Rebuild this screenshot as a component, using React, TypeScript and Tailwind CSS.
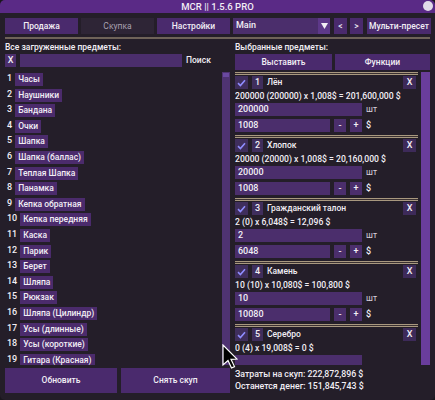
import React from "react";

const items = [
  "Часы",
  "Наушники",
  "Бандана",
  "Очки",
  "Шапка",
  "Шапка (баллас)",
  "Теплая Шапка",
  "Панамка",
  "Кепка обратная",
  "Кепка передняя",
  "Каска",
  "Парик",
  "Берет",
  "Шляпа",
  "Рюкзак",
  "Шляпа (Цилиндр)",
  "Усы (длинные)",
  "Усы (короткие)",
  "Гитара (Красная)",
];

const cards = [
  { name: "Лён", formula: "200000 (200000) x 1,008$ = 201,600,000 $", qty: "200000", price: "1008" },
  { name: "Хлопок", formula: "20000 (20000) x 1,008$ = 20,160,000 $", qty: "20000", price: "1008" },
  { name: "Гражданский талон", formula: "2 (0) x 6,048$ = 12,096 $", qty: "2", price: "6048" },
  { name: "Камень", formula: "10 (10) x 10,080$ = 100,800 $", qty: "10", price: "10080" },
  { name: "Серебро", formula: "0 (4) x 19,008$ = 0 $", qty: "0", price: "19008" },
];

// double tan line used between blocks
function Sep() {
  return (
    <div className="flex flex-col shrink-0">
      <div className="h-px bg-[#a8987f]" />
      <div className="h-px bg-[#3a3030]" />
      <div className="h-px bg-[#a8987f]" />
    </div>
  );
}

function Check() {
  return (
    <div className="w-[13px] h-[13px] bg-[#3f2e5c] flex items-center justify-center shrink-0">
      <svg width="9" height="8" viewBox="0 0 9 8">
        <path d="M1 4.2 L3.4 6.5 L8 1.3" stroke="#8f8dff" strokeWidth="1.6" fill="none" />
      </svg>
    </div>
  );
}

// last card is cut by the scroll area, so only its upper part is drawn
function Card({ n, c, cut }: { n: number; c: (typeof cards)[number]; cut?: boolean }) {
  return (
    <div className="flex flex-col shrink-0">
      <Sep />
      <div className="mt-[1px] h-[13px] flex items-center">
        <Check />
        <div className="ml-[4px] w-[11px] h-[13px] bg-[#3f2e5c] flex items-center justify-center text-[9px]">{n}</div>
        <span className="ml-[4px]">{c.name}</span>
        <div className="ml-auto mr-[2px] w-[13px] h-[13px] bg-[#3d2a59] flex items-center justify-center text-[9px]">X</div>
      </div>
      <div className="h-[14px] leading-[14px] whitespace-nowrap text-[8.6px]">{c.formula}</div>
      <div className="h-[13px] flex items-center">
        <div className="w-[127px] h-full bg-[#4b2e6c] px-[3px] leading-[13px] text-[9px]">{cut ? "" : c.qty}</div>
        {!cut && <span className="ml-[4px] font-normal text-[#d8d2de]">шт</span>}
      </div>
      {!cut && (
        <>
          <div className="mt-[3px] h-[13px] flex items-center text-[9px]">
            <div className="w-[95px] h-full bg-[#4b2e6c] px-[3px] leading-[13px]">{c.price}</div>
            <div className="ml-[4px] w-[12px] h-full bg-[#4b2e6c] flex items-center justify-center">-</div>
            <div className="ml-[4px] w-[12px] h-full bg-[#4b2e6c] flex items-center justify-center">+</div>
            <span className="ml-[4px]">$</span>
          </div>
          <div className="h-[3px]" />
        </>
      )}
    </div>
  );
}

export default function App() {
  return (
    <div className="w-[435px] h-[400px] bg-[#1a171d] relative font-['Roboto',sans-serif] text-[8.5px] font-medium text-[#f2eef5]">
      <div className="h-full rounded-[5px] overflow-hidden bg-[#241e29] flex flex-col">
        {/* title bar */}
        <div className="h-[13px] bg-[#5a2a86] relative flex items-center justify-center shrink-0">
          <span className="leading-[13px] text-[9.5px]">MCR || 1.5.6 PRO</span>
          <div className="absolute right-[2px] top-[1px] w-[10px] h-[10px] rounded-full bg-[#e2dbe9]" />
        </div>

        <div className="flex-1 flex flex-col px-[5px] min-h-0">
          {/* top tabs */}
          <div className="mt-[5px] h-[16px] flex shrink-0">
            <div className="w-[73px] shrink-0 bg-[#4a2a6d] flex items-center justify-center">Продажа</div>
            <div className="ml-[3px] w-[73px] shrink-0 bg-[#2e2536] text-[#a9a1b1] font-normal flex items-center justify-center">Скупка</div>
            <div className="ml-[3px] w-[73px] shrink-0 bg-[#4a2a6d] flex items-center justify-center">Настройки</div>
            <div className="ml-[3px] w-[97px] shrink-0 bg-[#4b2e6c] flex items-center">
              <span className="pl-[3px] flex-1 text-[9px]">Main</span>
              <div className="w-[12px] h-full bg-[#5d3889] flex items-center justify-center">
                <svg width="7" height="6" viewBox="0 0 7 6">
                  <path d="M0 0 H7 L3.5 6 Z" fill="#f2eef5" />
                </svg>
              </div>
            </div>
            <div className="ml-[4px] w-[13px] shrink-0 bg-[#4a2a6d] flex items-center justify-center">&lt;</div>
            <div className="ml-[3px] w-[13px] shrink-0 bg-[#4a2a6d] flex items-center justify-center">&gt;</div>
            <div className="ml-[4px] w-[64px] shrink-0 bg-[#4a2a6d] flex items-center justify-center whitespace-nowrap">Мульти-пресет</div>
          </div>

          <div className="mt-[3px] h-[2px] bg-[#6f6359] shrink-0" />

          <div className="flex-1 flex gap-[5px] min-h-0">
            {/* left column */}
            <div className="w-[225px] shrink-0 flex flex-col">
              <div className="mt-[2px] h-[12px] leading-[12px]">Все загруженные предметы:</div>
              <div className="mt-[1px] h-[13px] flex items-center">
                <div className="w-[11px] h-full bg-[#4b2e6c] flex items-center justify-center text-[9px]">X</div>
                <div className="ml-[4px] w-[162px] h-full bg-[#4b2e6c]" />
                <span className="ml-[4px]">Поиск</span>
              </div>
              <div className="mt-[5px] h-[293px] flex overflow-hidden">
                <div className="flex-1 flex flex-col gap-[2.6px] pt-[1px] overflow-hidden">
                  {items.map((t, i) => (
                    <div key={t} className="flex items-start h-[13px] shrink-0">
                      <span className="pl-[2px] leading-[10px] text-[9px]">{i + 1}</span>
                      <div className="ml-[3px] h-[13px] px-[3px] bg-[#4b2b6c] leading-[13px] whitespace-nowrap">{t}</div>
                    </div>
                  ))}
                </div>
                <div className="w-[8px] h-full bg-[#4f3372] flex flex-col">
                  <div className="h-[4px] mx-[1px] mt-[1px] bg-[#6a49a0]" />
                </div>
              </div>
              <div className="mt-[3px] h-[25px] flex gap-[4px]">
                <div className="w-[112px] bg-[#4a2a6d] flex items-center justify-center">Обновить</div>
                <div className="flex-1 bg-[#4a2a6d] flex items-center justify-center">Снять скуп</div>
              </div>
            </div>

            {/* right column */}
            <div className="w-[195px] shrink-0 min-w-0 flex flex-col">
              <div className="mt-[2px] h-[12px] leading-[12px]">Выбранные предметы:</div>
              <div className="mt-[1px] h-[16px] flex gap-[3px]">
                <div className="w-[97px] bg-[#4a2a6d] flex items-center justify-center">Выставить</div>
                <div className="flex-1 bg-[#4a2a6d] flex items-center justify-center">Функции</div>
              </div>
              <div className="mt-[2px] h-[293px] flex overflow-hidden">
                <div className="flex-1 min-w-0 flex flex-col overflow-hidden">
                  {cards.map((c, i) => (
                    <Card key={c.name} n={i + 1} c={c} cut={i === cards.length - 1} />
                  ))}
                </div>
                <div className="ml-[3px] w-[9px] h-full shrink-0 bg-[#6a3d9c]" />
              </div>
              <div className="mt-[3px] h-[12px] leading-[12px] text-[8.75px]">Затраты на скуп: 222,872,896 $</div>
              <div className="h-[12px] leading-[12px] text-[8.75px]">Останется денег: 151,845,743 $</div>
            </div>
          </div>
        </div>
      </div>

      {/* mouse pointer */}
      <svg className="absolute left-[222px] top-[344px]" width="16" height="26" viewBox="0 0 16 26">
        <path d="M1 1 L1 21 L6 16.5 L9.5 24 L12.5 22.6 L9 15.3 L15 15 Z" fill="#000" stroke="#fff" strokeWidth="1.2" />
      </svg>
    </div>
  );
}
